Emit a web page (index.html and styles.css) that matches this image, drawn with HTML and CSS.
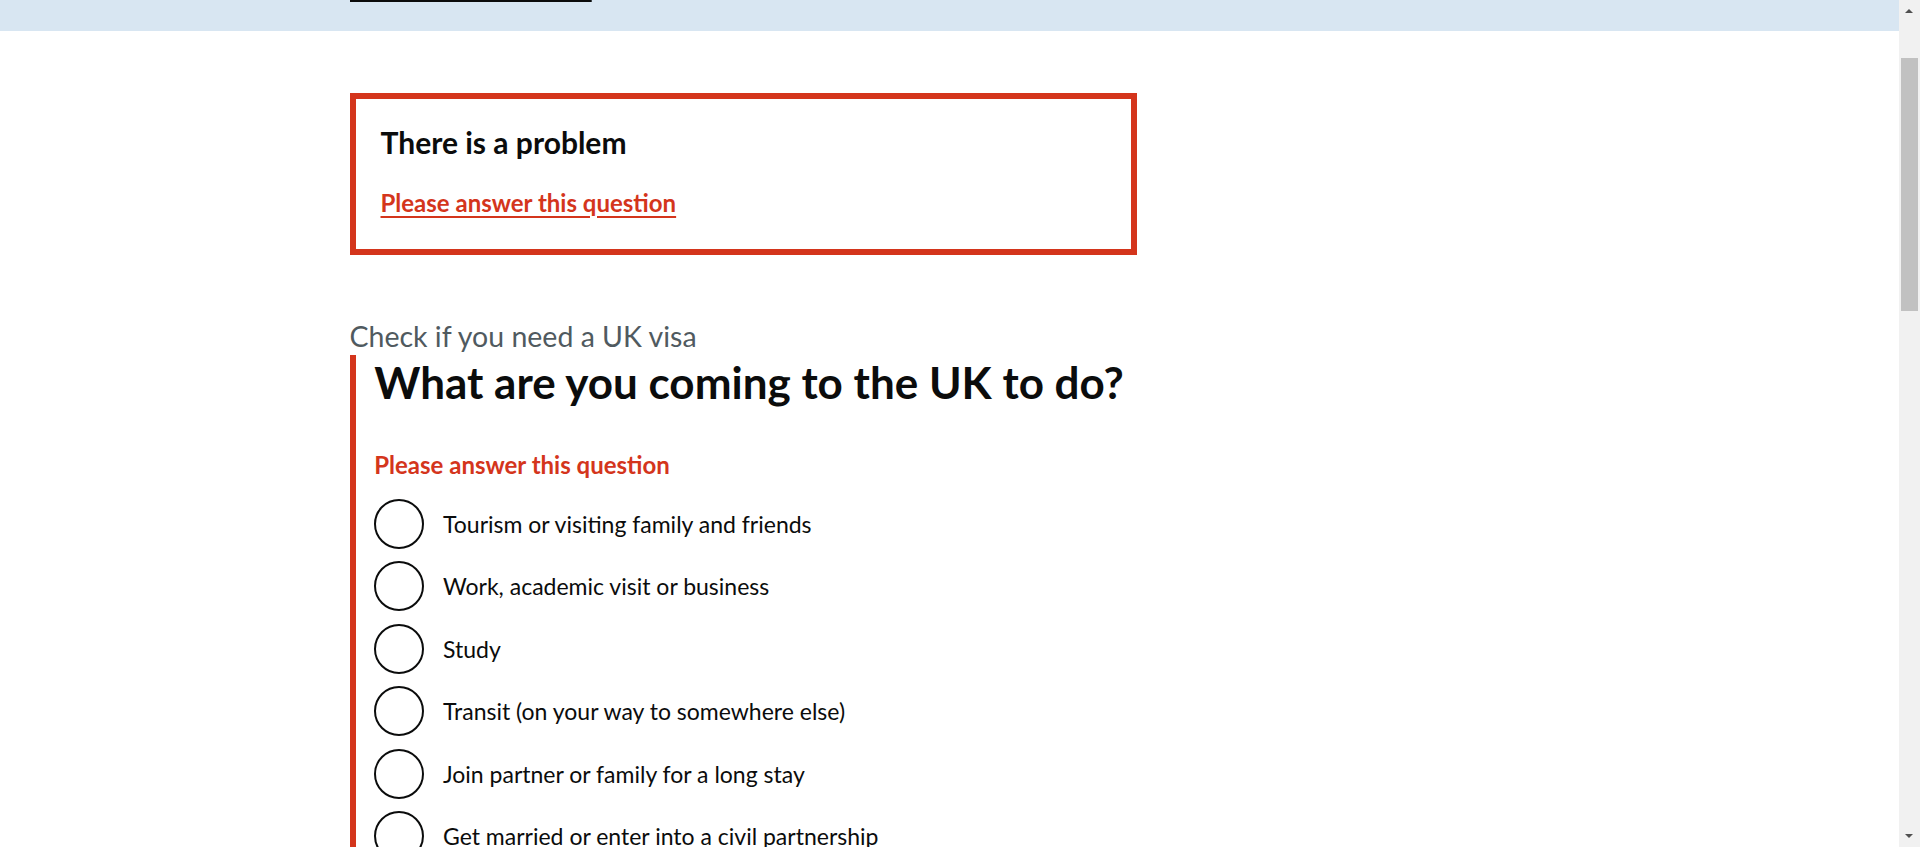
FILE: index.html
```html
<!DOCTYPE html>
<html lang="en">
<head>
<meta charset="utf-8">
<title>What are you coming to the UK to do? - Check if you need a UK visa - GOV.UK</title>
<link rel="stylesheet" href="styles.css">
</head>
<body>
<div class="page">
  <div class="notice-banner">
    <p class="notice-text"><a class="notice-link" href="#">Coronavirus (COVID-19)</a> – check what you need to do before you travel to the UK and find out about visas, including what you need to apply</p>
  </div>
  <div class="width-container">
    <main class="main">
      <div class="two-thirds">
        <div class="error-summary" role="alert">
          <h2 class="error-summary-title">There is a problem</h2>
          <ul class="error-summary-list">
            <li class="error-summary-item"><a class="error-summary-link" href="#response">Please answer this question</a></li>
          </ul>
        </div>

        <span class="caption">Check if you need a UK visa</span>
        <div class="form-group form-group-error">
          <fieldset class="fieldset">
            <legend class="legend">
              <h1 class="heading">What are you coming to the UK to do?</h1>
            </legend>
            <p class="error-message" id="response-error">Please answer this question</p>
            <div class="radios">
              <div class="radio-item"><span class="radio-circle"></span><label class="radio-label">Tourism or visiting family and friends</label></div>
              <div class="radio-item"><span class="radio-circle"></span><label class="radio-label">Work, academic visit or business</label></div>
              <div class="radio-item"><span class="radio-circle"></span><label class="radio-label">Study</label></div>
              <div class="radio-item"><span class="radio-circle"></span><label class="radio-label">Transit (on your way to somewhere else)</label></div>
              <div class="radio-item"><span class="radio-circle"></span><label class="radio-label">Join partner or family for a long stay</label></div>
              <div class="radio-item"><span class="radio-circle"></span><label class="radio-label">Get married or enter into a civil partnership</label></div>
              <div class="radio-item"><span class="radio-circle"></span><label class="radio-label">Stay with your child if they’re at school</label></div>
              <div class="radio-item"><span class="radio-circle"></span><label class="radio-label">Get private medical treatment</label></div>
              <div class="radio-item"><span class="radio-circle"></span><label class="radio-label">Visit on official diplomatic or government business</label></div>
            </div>
          </fieldset>
        </div>
      </div>
    </main>
  </div>
</div>
<div class="scrollbar" aria-hidden="true">
  <span class="scroll-arrow scroll-up"></span>
  <span class="scroll-thumb"></span>
  <span class="scroll-arrow scroll-down"></span>
</div>
</body>
</html>
```
FILE: styles.css
```css
html, body {
  margin: 0;
  padding: 0;
  height: 847px;
  overflow: hidden;
  background: #ffffff;
}

body {
  font-family: Lato, "Liberation Sans", Arial, sans-serif;
  color: #0b0c0c;
}

.page {
  width: 1899px;
}

.notice-banner {
  height: 31px;
  overflow: hidden;
  background: #d8e6f2;
}

.notice-text {
  margin: -27px 0 0 0;
  padding-left: 350px;
  font-size: 22.5px;
  line-height: 30px;
  white-space: nowrap;
  color: #0b0c0c;
}

.notice-link {
  color: #0b0c0c;
  text-decoration: underline;
  text-decoration-thickness: 2px;
  text-underline-offset: 4px;
}

.width-container {
  max-width: 1200px;
  margin: 0 auto;
}

.main {
  display: block;
  padding-top: 62px;
}

.two-thirds {
  width: 787px;
}

.error-summary {
  border: 6px solid #d4351c;
  padding: 25px 25px 25px 25px;
  margin-bottom: 62.5px;
}

.error-summary-title {
  margin: 0 0 25px 0;
  font-size: 30px;
  line-height: 37.5px;
  font-weight: 700;
  color: #0b0c0c;
}

.error-summary-list {
  list-style: none;
  margin: 0;
  padding: 0;
}

.error-summary-item {
  margin-bottom: 6.25px;
  font-size: 24px;
  line-height: 31.25px;
  font-weight: 700;
}

.error-summary-link {
  color: #d4351c;
  text-decoration: underline;
  text-decoration-thickness: 1.5px;
  text-underline-offset: 3.5px;
}

.caption {
  display: block;
  font-size: 28.5px;
  line-height: 37.5px;
  color: #505a5f;
  margin-bottom: 0;
}

.form-group {
  padding-top: 1.5px;
}

.form-group-error {
  border-left: 6.25px solid #d4351c;
  padding-left: 18.75px;
}

.fieldset {
  margin: 0;
  padding: 0;
  border: 0;
  min-width: 0;
}

.legend {
  padding: 0;
  display: block;
  width: 100%;
}

.heading {
  margin: 0;
  font-size: 44px;
  line-height: 50px;
  font-weight: 700;
  color: #0b0c0c;
  white-space: nowrap;
}

.error-message {
  margin: 42.4px 0 18.75px 0;
  font-size: 24px;
  line-height: 31.25px;
  font-weight: 700;
  color: #d4351c;
}

.radios {
  display: flex;
  flex-direction: column;
  gap: 12.5px;
}

.radio-item {
  position: relative;
  min-height: 50px;
  padding-left: 50px;
  box-sizing: border-box;
}

.radio-circle {
  position: absolute;
  left: 0;
  top: 0;
  width: 50px;
  height: 50px;
  box-sizing: border-box;
  border: 2.5px solid #0b0c0c;
  border-radius: 50%;
  background: #ffffff;
}

.radio-label {
  display: inline-block;
  padding: 10px 18.75px 6.25px 18.75px;
  font-size: 23px;
  line-height: 31.25px;
  color: #0b0c0c;
}

.scrollbar {
  position: fixed;
  top: 0;
  right: 0;
  width: 21px;
  height: 847px;
  background: #f1f1f1;
}

.scroll-thumb {
  position: absolute;
  left: 2px;
  top: 58px;
  width: 17px;
  height: 253px;
  background: #c1c1c1;
}

.scroll-arrow {
  position: absolute;
  left: 6px;
  width: 0;
  height: 0;
  border-left: 4.5px solid transparent;
  border-right: 4.5px solid transparent;
}

.scroll-up {
  top: 9px;
  border-bottom: 4px solid #505050;
}

.scroll-down {
  bottom: 9px;
  border-top: 4px solid #505050;
}
```
